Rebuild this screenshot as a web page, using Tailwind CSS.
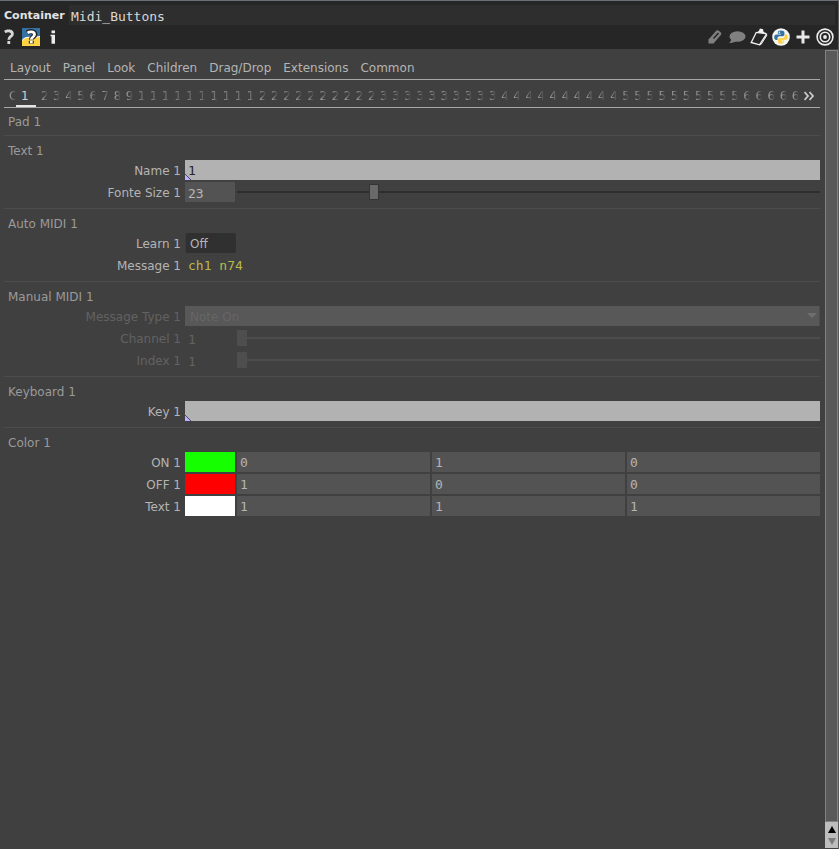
<!DOCTYPE html>
<html lang="en">
<head>
<meta charset="utf-8">
<title>Midi_Buttons</title>
<script src="https://cdn.jsdelivr.net/npm/@tailwindcss/browser@4"></script>
</head>
<body class="flex min-h-screen flex-col border-t border-r border-t-[#6a6f78] border-r-[#5a5a5a] bg-[#404040] font-['DejaVu_Sans',sans-serif] text-[12px] leading-[22px] text-[#b4b4b4]">
<header class="bg-[#262626] pt-1">
  <div class="flex h-5 items-center pr-[3px]">
    <label for="opname" class="h-5 w-[69px] shrink-0 pl-1 text-[11px] font-bold text-[#e2e2e2]">Container</label>
    <input id="opname" value="Midi_Buttons" class="h-5 min-w-0 flex-1 bg-[#2e2e2e] px-[2px] pt-[2px] font-['DejaVu_Sans_Mono',monospace] text-[13px] leading-[18px] text-[#d8d8d8] outline-none">
  </div>
  <div class="flex h-6 items-center justify-between pr-1 pl-[2px]">
    <div class="flex items-center">
      <button aria-label="Help" class="flex size-5 items-center">
        <svg viewBox="0 0 20 20" class="size-5" fill="none" stroke="#d6d6d6" stroke-width="2.8"><path d="M2.800 5C5.600 3.200 10.400 3.500 10.400 6.900c0 2.700-3.600 2.400-3.600 5.800M6.800 14v3"/></svg>
      </button>
      <button aria-label="Python help" class="size-[18px]">
        <svg viewBox="0 0 18 18" class="size-[18px]"><path fill="#3571a3" d="M0 0h18v18H0z"/><path fill="#fff" d="M0 12C2 9 5 8.600 9 9s6-1 9-1v10H0z"/><path fill="#ffd343" d="M0 13c2-3 5-3.400 9-3s6-1 9-1v9H0z"/><path d="M5.300 4.800C8 2.800 12.800 3.200 12.800 6.500c0 2.500-3.500 2.500-3.500 5M9.300 12.800v2.700" fill="none" stroke="#222" stroke-width="5"/><path d="M5.600 4.800C8 3.200 12.500 3.400 12.500 6.500c0 2.500-3.200 2.500-3.200 5M9.300 12.800v2.500" fill="none" stroke="#fff" stroke-width="2.800"/></svg>
      </button>
      <button aria-label="Info" class="ml-1 size-[18px]">
        <svg viewBox="0 0 18 18" class="size-[18px]" fill="#ececec"><path d="M7.500 2.500h3.500v2.800H7.500zM6.500 6.700H11v9H7.500V8.200h-1z"/></svg>
      </button>
    </div>
    <div class="flex items-center gap-1">
      <button aria-label="Edit"><svg viewBox="0 0 18 18" class="size-[18px]"><path fill="#808080" d="M2.500 11.500 10.500 2.600q1-.8 2 0l2.500 2.200q.8 1 0 2L7.500 15.500H2.500z"/><path d="m7.500 10.500 5-5.500" stroke="#262626" stroke-width="1.500"/></svg></button>
      <button aria-label="Comment"><svg viewBox="0 0 18 18" class="size-[18px]" fill="#808080"><ellipse cx="9.500" cy="8.500" rx="8" ry="5.200"/><path d="M3 10c.5 2 0 3.500-2 4.800 3 .4 5.500-.4 7.500-2z"/></svg></button>
      <button aria-label="Clipboard"><svg viewBox="0 0 18 18" class="size-[18px]" fill="none" stroke="#f2f2f2" stroke-width="1.300"><path d="M6.500 4 1.200 14.500l8.300 2.300L16.500 6.200l-2-1.500"/><path d="m16.500 6.200.2 1.500L11 16.500l-1.500.3" stroke-width="1"/><path d="m7.500 4.500 2-1.200.8-2 2.200.4.300 2 1.500 1.700z" fill="#f2f2f2"/></svg></button>
      <button aria-label="Python"><svg viewBox="0 0 18 18" class="size-[18px]"><circle cx="9" cy="9" r="8.800" fill="#f6f6f6"/><path fill="#3673a5" d="M8.900 2.500c-2.500 0-3.100.8-3.100 2v1.300H9v.6H4.500C3 6.400 2.200 7.500 2.200 9.200s.8 2.700 2 2.700h1.300v-1.500c0-1.200 1-2.100 2.200-2.100h3c1 0 1.700-.8 1.700-1.700V4.500c0-1.200-1.200-2-3.500-2z"/><path fill="#ffd140" d="M9.100 15.700c2.500 0 3.100-.8 3.100-2v-1.300H9v-.6h4.500c1.500 0 2.300-1.100 2.300-2.800s-.8-2.700-2-2.700h-1v1.500c0 1.200-1 2.100-2.200 2.100h-3c-1 0-1.700.8-1.700 1.700v2.100c0 1.200 1 2 3.200 2z"/><circle cx="7.300" cy="4.300" r=".7" fill="#fff"/><circle cx="10.700" cy="13.900" r=".7" fill="#fff"/></svg></button>
      <button aria-label="Add"><svg viewBox="0 0 18 18" class="size-[18px]" stroke="#e8e8e8" stroke-width="3"><path d="M9 2.500v13M2.500 9h13"/></svg></button>
      <button aria-label="Target"><svg viewBox="0 0 18 18" class="size-[18px]" fill="none" stroke="#ededed" stroke-width="1.600"><circle cx="9" cy="9" r="7.900"/><circle cx="9" cy="9" r="4.700"/><circle cx="9" cy="9" r="1.900" fill="#ededed" stroke="none"/></svg></button>
    </div>
  </div>
</header>

<div class="flex flex-1">
  <main class="min-w-0 flex-1 pr-[5px] pl-1">
    <nav class="flex h-[31px] items-end gap-3 border-b border-[#a8a8a8] pb-px pl-[6px] leading-5">
      <a href="#">Layout</a><a href="#">Panel</a><a href="#">Look</a><a href="#">Children</a><a href="#">Drag/Drop</a><a href="#">Extensions</a><a href="#">Common</a>
    </nav>
    <nav class="flex h-7 items-end border-b border-[#a8a8a8] text-[#a0a0a0]">
      <a href="#" class="ml-[5px] h-[22px] w-[7px] overflow-hidden mask-r-from-10% text-[#a0a0a0]">C</a>
      <a href="#" class="h-[22px] w-5 border-b-2 border-[#e4e4e4] pl-[5px] text-[#d0d0d0]">1</a>
      <div id="pages" class="flex min-w-0 flex-1 pl-[5px]"></div>
      <button aria-label="More pages" class="flex h-[22px] w-4 items-center"><svg viewBox="0 0 12 12" class="size-3" fill="none" stroke="#cacaca" stroke-width="1.800"><path d="m.5 2 3.500 4-3.500 4M5.500 2 9 6l-3.500 4"/></svg></button>
    </nav>

    <section class="border-b border-[#4c4c4c] pt-[3px] pb-1 pl-1"><h2 class="h-5 text-[#9a9a9a]">Pad 1</h2></section>

    <section class="border-b border-[#4c4c4c] pt-1 pb-[6px]">
      <h2 class="h-5 pl-1 text-[#9a9a9a]">Text 1</h2>
      <div class="flex flex-col gap-[2px]">
        <div class="flex h-5 gap-1"><label for="name" class="w-[177px] shrink-0 text-right">Name 1</label>
          <div class="relative flex min-w-0 flex-1"><input id="name" value="1" class="min-w-0 flex-1 bg-[#b2b2b2] px-[3px] pt-[2px] font-['DejaVu_Sans_Mono',monospace] text-[13px] leading-[18px] text-[#262626] outline-none"><svg viewBox="0 0 6 6" class="absolute bottom-0 left-0 size-[6px]"><path d="M0 0v6h6z" fill="#b9b0ff"/><path d="m0 0 6 6" stroke="#4b4870"/></svg></div></div>
        <div class="flex h-5 gap-1"><label for="size" class="w-[177px] shrink-0 text-right">Fonte Size 1</label>
          <div class="flex min-w-0 flex-1 items-center gap-[2px]"><input id="size" value="23" class="h-5 w-[50px] bg-[#535353] px-[3px] pt-[2px] font-['DejaVu_Sans_Mono',monospace] text-[13px] leading-[18px] text-[#b8b8b8] outline-none">
          <input type="range" aria-label="Fonte Size 1" min="0" max="100" value="23" class="h-4 min-w-0 flex-1 appearance-none bg-transparent [&::-webkit-slider-runnable-track]:h-[2px] [&::-webkit-slider-runnable-track]:bg-[#2e2e2e] [&::-webkit-slider-thumb]:-mt-[7px] [&::-webkit-slider-thumb]:h-4 [&::-webkit-slider-thumb]:w-[10px] [&::-webkit-slider-thumb]:appearance-none [&::-webkit-slider-thumb]:border [&::-webkit-slider-thumb]:border-[#343434] [&::-webkit-slider-thumb]:bg-[#696969]"></div></div>
      </div>
    </section>

    <section class="border-b border-[#4c4c4c] pt-1 pb-[6px]">
      <h2 class="h-5 pl-1 text-[#9a9a9a]">Auto MIDI 1</h2>
      <div class="flex flex-col gap-[2px]">
        <div class="flex h-5 gap-1"><label for="learn" class="w-[177px] shrink-0 text-right">Learn 1</label><button id="learn" class="h-5 w-[51px] rounded-[2px] border-l border-[#3a3a3a] bg-[#303030] pt-[2px] pl-1 text-left leading-[18px]">Off</button></div>
        <div class="flex h-5 gap-1"><label for="msg" class="w-[177px] shrink-0 text-right">Message 1</label><input id="msg" readonly value="ch1 n74" class="min-w-0 flex-1 bg-transparent px-[3px] pt-[2px] font-['DejaVu_Sans_Mono',monospace] text-[13px] leading-[18px] text-[#b9b94a] outline-none"></div>
      </div>
    </section>

    <section class="border-b border-[#4c4c4c] pt-1 pb-[6px]">
      <h2 class="h-5 pl-1 text-[#9a9a9a]">Manual MIDI 1</h2>
      <div class="flex flex-col gap-[2px] text-[#626262]">
        <div class="flex h-5 gap-1"><label for="type" class="w-[177px] shrink-0 text-right">Message Type 1</label>
          <div class="relative flex min-w-0 flex-1"><select id="type" disabled class="min-w-0 flex-1 appearance-none border-r border-[#4c4c4c] bg-[#585858] pt-[2px] pl-[5px] leading-[18px] text-[#666666] opacity-100"><option>Note On</option></select><svg viewBox="0 0 10 5" class="pointer-events-none absolute top-[7px] right-[3px] h-[5px] w-[10px]" fill="#6e6e6e"><path d="M0 0h10L5 5z"/></svg></div></div>
        <div class="flex h-5 gap-1"><label for="chan" class="w-[177px] shrink-0 text-right">Channel 1</label>
          <div class="flex min-w-0 flex-1 items-center gap-[2px]"><input id="chan" disabled value="1" class="h-5 w-[50px] px-[3px] pt-[2px] font-['DejaVu_Sans_Mono',monospace] text-[13px] leading-[18px]">
          <input type="range" aria-label="Channel 1" disabled min="1" max="16" value="1" class="h-4 min-w-0 flex-1 appearance-none bg-transparent [&::-webkit-slider-runnable-track]:h-[2px] [&::-webkit-slider-runnable-track]:bg-[#4c4c4c] [&::-webkit-slider-thumb]:-mt-[7px] [&::-webkit-slider-thumb]:h-4 [&::-webkit-slider-thumb]:w-[10px] [&::-webkit-slider-thumb]:appearance-none [&::-webkit-slider-thumb]:bg-[#4e4e4e]"></div></div>
        <div class="flex h-5 gap-1"><label for="index" class="w-[177px] shrink-0 text-right">Index 1</label>
          <div class="flex min-w-0 flex-1 items-center gap-[2px]"><input id="index" disabled value="1" class="h-5 w-[50px] px-[3px] pt-[2px] font-['DejaVu_Sans_Mono',monospace] text-[13px] leading-[18px]">
          <input type="range" aria-label="Index 1" disabled min="1" max="128" value="1" class="h-4 min-w-0 flex-1 appearance-none bg-transparent [&::-webkit-slider-runnable-track]:h-[2px] [&::-webkit-slider-runnable-track]:bg-[#4c4c4c] [&::-webkit-slider-thumb]:-mt-[7px] [&::-webkit-slider-thumb]:h-4 [&::-webkit-slider-thumb]:w-[10px] [&::-webkit-slider-thumb]:appearance-none [&::-webkit-slider-thumb]:bg-[#4e4e4e]"></div></div>
      </div>
    </section>

    <section class="border-b border-[#4c4c4c] pt-1 pb-[6px]">
      <h2 class="h-5 pl-1 text-[#9a9a9a]">Keyboard 1</h2>
      <div class="flex h-5 gap-1"><label for="key" class="w-[177px] shrink-0 text-right">Key 1</label>
        <div class="relative flex min-w-0 flex-1"><input id="key" class="min-w-0 flex-1 bg-[#b2b2b2] px-[3px] pt-[2px] font-['DejaVu_Sans_Mono',monospace] text-[13px] leading-[18px] text-[#262626] outline-none"><svg viewBox="0 0 6 6" class="absolute bottom-0 left-0 size-[6px]"><path d="M0 0v6h6z" fill="#b9b0ff"/><path d="m0 0 6 6" stroke="#4b4870"/></svg></div></div>
    </section>

    <section class="pt-1">
      <h2 class="h-5 pl-1 text-[#9a9a9a]">Color 1</h2>
      <div class="flex flex-col gap-[2px]">
        <div class="flex h-5 gap-1"><label for="on" class="w-[177px] shrink-0 text-right">ON 1</label><div class="flex min-w-0 flex-1 gap-[2px] font-['DejaVu_Sans_Mono',monospace] text-[13px] leading-[18px]"><button aria-label="ON colour" class="w-[50px] shrink-0 bg-[#16ff00]"></button><input id="on" value="0" class="min-w-0 flex-1 bg-[#535353] px-[3px] pt-[2px]"><input aria-label="ON green" value="1" class="min-w-0 flex-1 bg-[#535353] px-[3px] pt-[2px]"><input aria-label="ON blue" value="0" class="min-w-0 flex-1 bg-[#535353] px-[3px] pt-[2px]"></div></div>
        <div class="flex h-5 gap-1"><label for="off" class="w-[177px] shrink-0 text-right">OFF 1</label><div class="flex min-w-0 flex-1 gap-[2px] font-['DejaVu_Sans_Mono',monospace] text-[13px] leading-[18px]"><button aria-label="OFF colour" class="w-[50px] shrink-0 bg-[#ff0000]"></button><input id="off" value="1" class="min-w-0 flex-1 bg-[#535353] px-[3px] pt-[2px]"><input aria-label="OFF green" value="0" class="min-w-0 flex-1 bg-[#535353] px-[3px] pt-[2px]"><input aria-label="OFF blue" value="0" class="min-w-0 flex-1 bg-[#535353] px-[3px] pt-[2px]"></div></div>
        <div class="flex h-5 gap-1"><label for="txt" class="w-[177px] shrink-0 text-right">Text 1</label><div class="flex min-w-0 flex-1 gap-[2px] font-['DejaVu_Sans_Mono',monospace] text-[13px] leading-[18px]"><button aria-label="Text colour" class="w-[50px] shrink-0 bg-white"></button><input id="txt" value="1" class="min-w-0 flex-1 bg-[#535353] px-[3px] pt-[2px]"><input aria-label="Text green" value="1" class="min-w-0 flex-1 bg-[#535353] px-[3px] pt-[2px]"><input aria-label="Text blue" value="1" class="min-w-0 flex-1 bg-[#535353] px-[3px] pt-[2px]"></div></div>
      </div>
    </section>
  </main>

  <div class="flex w-[13px] flex-col pt-px">
    <div class="flex-1 border border-[#828282] bg-[#595959]"></div>
    <div class="flex h-[26px] flex-col items-center justify-center gap-[5px] bg-[#bdbdbd]">
      <button aria-label="Scroll up" class="h-[7px]"><svg viewBox="0 0 8 7" class="h-[7px] w-2" fill="#000"><path d="M4 0l4 7H0z"/></svg></button>
      <button aria-label="Scroll down" class="h-[7px]"><svg viewBox="0 0 8 7" class="h-[7px] w-2" fill="#7c7c7c"><path d="M0 0h8L4 7z"/></svg></button>
    </div>
    <div class="h-px"></div>
  </div>
</div>
<script>
// Page tabs 2 to 64; each shrinks to its first digit and fades out.
const pages = document.getElementById('pages');
for (let n = 2; n <= 64; n++) {
  const cell = document.createElement('a');
  cell.href = '#';
  cell.className = 'h-[22px] min-w-0 flex-1';
  const text = document.createElement('span');
  text.className = 'block w-[7px] overflow-hidden mask-r-from-10% text-[#a0a0a0]';
  text.textContent = String(n)[0];
  cell.append(text);
  pages.append(cell);
}
</script>
</body>
</html>
